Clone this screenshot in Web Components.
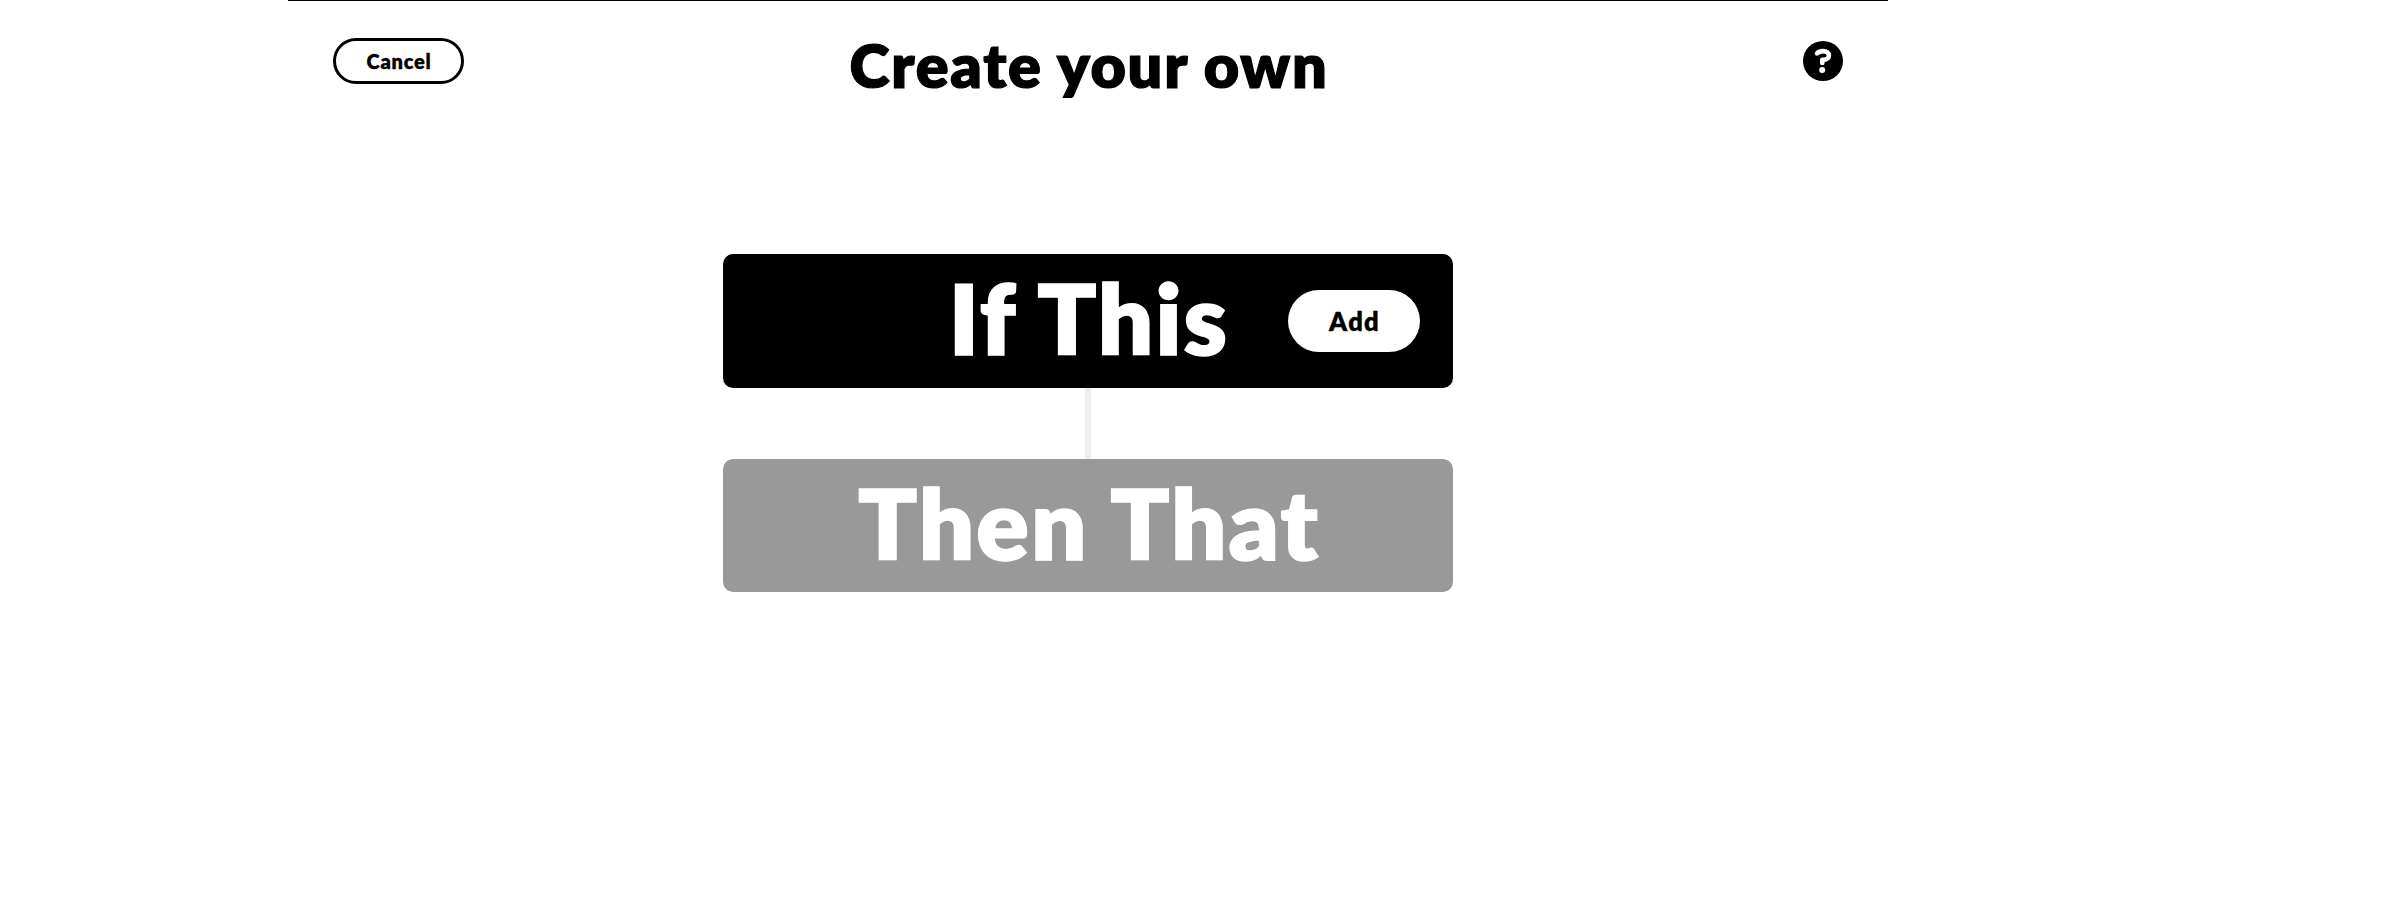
<!DOCTYPE html>
<html lang="en">
<head>
<meta charset="utf-8">
<title>Create your own</title>
<style>
body { margin: 0; background: #fff; color: #000; font-family: Lato, "Open Sans", sans-serif; font-weight: 800; }
</style>
</head>
<body>
<applet-composer>
  <composer-header slot="header">
    <pill-button slot="start">Cancel</pill-button>
    Create your own
    <help-icon slot="end"></help-icon>
  </composer-header>
  <step-card>If This<pill-button slot="action" solid>Add</pill-button></step-card>
  <step-connector></step-connector>
  <step-card muted>Then That</step-card>
</applet-composer>
<script>
const define = (name, markup) => {
  const template = document.createElement('template');
  template.innerHTML = markup;
  customElements.define(name, class extends HTMLElement {
    constructor() {
      super();
      this.attachShadow({ mode: 'open' }).append(template.content.cloneNode(true));
    }
  });
};

define('applet-composer', `
  <style>
    :host { display: block; box-sizing: border-box; width: 1600px; margin-left: 288px; border-top: 1px solid #000; }
    main { display: flex; flex-direction: column; width: 730px; margin: 128px auto 0; }
  </style>
  <slot name="header"></slot>
  <main><slot></slot></main>`);

define('composer-header', `
  <style>
    :host { display: grid; grid-template-columns: 1fr auto 1fr; align-items: start; height: 125px; padding: 0 45px; }
    h1 { margin: 26px 0 0; padding-left: 2px; font: inherit; font-size: 61px; line-height: 76px; letter-spacing: 1.75px;
      -webkit-text-stroke: 1.2px currentColor; white-space: nowrap; }
    .start { margin-top: 37px; justify-self: start; }
    .end { margin-top: 40px; justify-self: end; }
  </style>
  <div class="start"><slot name="start"></slot></div>
  <h1><slot></slot></h1>
  <div class="end"><slot name="end"></slot></div>`);

define('pill-button', `
  <style>
    :host { display: block; }
    button { display: block; box-sizing: border-box; width: 131px; height: 46px; padding: 0 0 1px 1px; border: 3px solid #000;
      border-radius: 23px; background: #fff; color: #000; font: inherit; font-size: 20px; line-height: 24px; letter-spacing: .75px;
      -webkit-text-stroke: .3px currentColor; }
    :host([solid]) button { width: 132px; height: 62px; border: 0; padding: 0 0 0 1px; border-radius: 31px; font-size: 25.5px; line-height: 32px; letter-spacing: 1.3px; }
  </style>
  <button><slot></slot></button>`);

define('help-icon', `
  <style>:host, svg { display: block; width: 40px; height: 40px; }</style>
  <svg viewBox="0 0 40 40" role="img" aria-label="Help">
    <circle cx="20" cy="20" r="20"/>
    <path d="M14 12.3C15.5 10.8 17.5 10.1 20 10.1c3.8 0 5.9 1.8 5.9 4.4 0 3-2.2 4.3-6.6 4.4v3.1" fill="none" stroke="#fff" stroke-width="4.6" stroke-linecap="round" stroke-linejoin="round"/>
    <circle cx="19.2" cy="29" r="3" fill="#fff"/>
  </svg>`);

define('step-card', `
  <style>
    :host { display: grid; grid-template-columns: 1fr auto 1fr; align-items: center; box-sizing: border-box; height: 134px;
      padding: 0 33px; border-radius: 10px; background: #000; color: #fff; -webkit-text-stroke: 0; }
    :host([muted]) { height: 133px; background: #999; }
    h2 { grid-column: 2; margin: 0; padding: 0 0 6px 2px; font: inherit; font-size: 97.5px; line-height: 118px; letter-spacing: 2.1px; white-space: nowrap; }
    h2 { -webkit-text-stroke: 1.6px currentColor; }
    .action { justify-self: end; }
  </style>
  <h2><slot></slot></h2>
  <div class="action"><slot name="action"></slot></div>`);

define('step-connector', `
  <style>:host { display: block; width: 6px; height: 71px; margin: 0 auto; background: #eee; }</style>`);
</script>
</body>
</html>
